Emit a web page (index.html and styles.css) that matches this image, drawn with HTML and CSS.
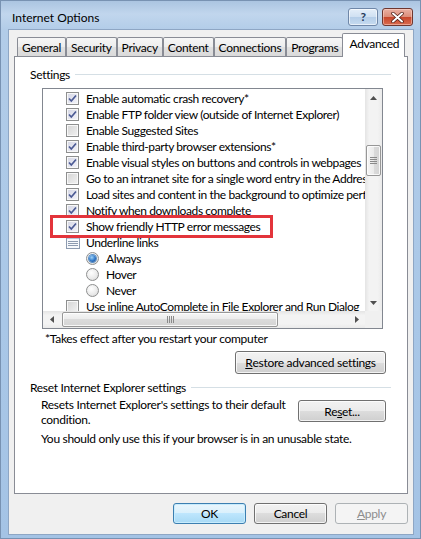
FILE: index.html
```html
<!DOCTYPE html>
<html>
<head>
<meta charset="utf-8">
<title>Internet Options</title>
<link rel="stylesheet" href="styles.css">
</head>
<body>
<div class="window">
  <div class="titlebar">
    <span class="title">Internet Options</span>
    <div class="caption">
      <div class="cap-btn help"><span>?</span></div>
      <div class="cap-btn close">
        <svg width="13" height="11" viewBox="0 0 13 11"><path d="M2 1.5 L11 9.5 M11 1.5 L2 9.5" stroke="#4a1a12" stroke-width="3.4" stroke-linecap="round"/><path d="M2 1.5 L11 9.5 M11 1.5 L2 9.5" stroke="#ffffff" stroke-width="2" stroke-linecap="round"/></svg>
      </div>
    </div>
  </div>

  <div class="client">
    <div class="tabs">
      <div class="tab">General</div>
      <div class="tab">Security</div>
      <div class="tab">Privacy</div>
      <div class="tab">Content</div>
      <div class="tab">Connections</div>
      <div class="tab">Programs</div>
      <div class="tab active">Advanced</div>
    </div>

    <div class="panel">
      <div class="group-head"><span>Settings</span><span class="rule"></span></div>

      <div class="listbox">
        <div class="list-area">
          <div class="row"><span class="cb on"><svg width="11" height="11" viewBox="0 0 11 11"><path d="M2 5.5 L4.3 8 L9 2.5" fill="none" stroke="#4b5a94" stroke-width="1.7"/></svg></span>Enable automatic crash recovery*</div>
          <div class="row"><span class="cb on"><svg width="11" height="11" viewBox="0 0 11 11"><path d="M2 5.5 L4.3 8 L9 2.5" fill="none" stroke="#4b5a94" stroke-width="1.7"/></svg></span>Enable FTP folder view (outside of Internet Explorer)</div>
          <div class="row"><span class="cb"></span>Enable Suggested Sites</div>
          <div class="row"><span class="cb on"><svg width="11" height="11" viewBox="0 0 11 11"><path d="M2 5.5 L4.3 8 L9 2.5" fill="none" stroke="#4b5a94" stroke-width="1.7"/></svg></span>Enable third-party browser extensions*</div>
          <div class="row"><span class="cb on"><svg width="11" height="11" viewBox="0 0 11 11"><path d="M2 5.5 L4.3 8 L9 2.5" fill="none" stroke="#4b5a94" stroke-width="1.7"/></svg></span>Enable visual styles on buttons and controls in webpages</div>
          <div class="row"><span class="cb"></span>Go to an intranet site for a single word entry in the Address bar</div>
          <div class="row"><span class="cb on"><svg width="11" height="11" viewBox="0 0 11 11"><path d="M2 5.5 L4.3 8 L9 2.5" fill="none" stroke="#4b5a94" stroke-width="1.7"/></svg></span>Load sites and content in the background to optimize performance</div>
          <div class="row"><span class="cb on"><svg width="11" height="11" viewBox="0 0 11 11"><path d="M2 5.5 L4.3 8 L9 2.5" fill="none" stroke="#4b5a94" stroke-width="1.7"/></svg></span>Notify when downloads complete</div>
          <div class="row"><span class="cb on"><svg width="11" height="11" viewBox="0 0 11 11"><path d="M2 5.5 L4.3 8 L9 2.5" fill="none" stroke="#4b5a94" stroke-width="1.7"/></svg></span>Show friendly HTTP error messages</div>
          <div class="row"><span class="list-icon"><svg width="14" height="13" viewBox="0 0 14 13"><rect x="0.5" y="0.5" width="13" height="12" fill="#f7f9fc" stroke="#8d9bb0"/><rect x="1" y="1" width="12" height="2" fill="#b9c6d8"/><path d="M2 5.5 H12 M2 7.5 H12 M2 9.5 H12" stroke="#8d9bb0"/></svg></span>Underline links</div>
          <div class="row sub"><span class="radio on"><span class="dot"></span></span>Always</div>
          <div class="row sub"><span class="radio"></span>Hover</div>
          <div class="row sub"><span class="radio"></span>Never</div>
          <div class="row"><span class="cb"></span>Use inline AutoComplete in File Explorer and Run Dialog</div>
          <div class="highlight"></div>
        </div>

        <div class="vscroll">
          <div class="sb-btn"><svg width="7" height="4" viewBox="0 0 7 4"><path d="M0 4 L3.5 0 L7 4 Z" fill="#505050"/></svg></div>
          <div class="vtrack">
            <div class="vthumb"><svg width="7" height="7" viewBox="0 0 7 7"><path d="M0 0.5 H7 M0 2.5 H7 M0 4.5 H7 M0 6.5 H7" stroke="#8a8a8a"/></svg></div>
          </div>
          <div class="sb-btn"><svg width="7" height="4" viewBox="0 0 7 4"><path d="M0 0 L7 0 L3.5 4 Z" fill="#505050"/></svg></div>
        </div>

        <div class="hscroll">
          <div class="sb-btn"><svg width="4" height="7" viewBox="0 0 4 7"><path d="M4 0 L4 7 L0 3.5 Z" fill="#505050"/></svg></div>
          <div class="hthumb"><svg width="7" height="7" viewBox="0 0 7 7"><path d="M0.5 0 V7 M2.5 0 V7 M4.5 0 V7 M6.5 0 V7" stroke="#8a8a8a"/></svg></div>
          <div class="htrack"></div>
          <div class="sb-btn"><svg width="4" height="7" viewBox="0 0 4 7"><path d="M0 0 L0 7 L4 3.5 Z" fill="#505050"/></svg></div>
        </div>
        <div class="corner"></div>
      </div>

      <div class="note">*Takes effect after you restart your computer</div>

      <div class="restore-row">
        <button class="btn restore"><u>R</u>estore advanced settings</button>
      </div>

      <div class="group-head reset-head"><span>Reset Internet Explorer settings</span><span class="rule"></span></div>

      <div class="reset-row">
        <p class="reset-text">Resets Internet Explorer's settings to their default<br>condition.</p>
        <button class="btn reset">Re<u>s</u>et...</button>
      </div>

      <p class="warn">You should only use this if your browser is in an unusable state.</p>
    </div>

    <div class="dialog-buttons">
      <button class="btn dlg default">OK</button>
      <button class="btn dlg">Cancel</button>
      <button class="btn dlg disabled"><u>A</u>pply</button>
    </div>
  </div>
</div>
</body>
</html>
```

FILE: styles.css
```css
* { box-sizing: border-box; }

html, body {
  margin: 0;
  padding: 0;
}

body {
  width: 421px;
  height: 539px;
  overflow: hidden;
  font-family: Lato, "Segoe UI", "Noto Sans", sans-serif;
  font-size: 12px;
  letter-spacing: -0.3px;
  color: #000;
  background: #a8c6e6;
}

.window {
  width: 421px;
  height: 539px;
  display: flex;
  flex-direction: column;
  background: linear-gradient(180deg, #a9c3e0 0, #c1d6ed 14px, #b2cce8 30px, #a9c7e7 60%, #a4c3e5 100%);
  box-shadow: inset 0 0 0 1px #7892b2;
}

/* ---------- title bar ---------- */
.titlebar {
  height: 30px;
  flex: none;
  display: flex;
  align-items: center;
  padding: 4px 8px 0 12px;
}

.title {
  flex: 1;
  letter-spacing: 0;
}

.caption {
  display: flex;
  gap: 4px;
}

.cap-btn {
  height: 18px;
  border-radius: 3px;
  display: flex;
  align-items: center;
  justify-content: center;
}

.help {
  width: 30px;
  border: 1px solid #6f87a8;
  background: linear-gradient(180deg, #e4eef9 0, #cfe0f2 50%, #b4cde8 50%, #c6dbf0 100%);
  box-shadow: inset 0 0 0 1px rgba(255, 255, 255, 0.6);
  color: #233a5a;
  font-weight: bold;
  font-size: 12px;
  line-height: 1;
}

.close {
  width: 31px;
  border: 1px solid #6e3730;
  background: linear-gradient(180deg, #eab0a3 0, #dc8c78 50%, #c7452a 50%, #d86b4f 100%);
  box-shadow: inset 0 0 0 1px rgba(255, 220, 210, 0.5);
}

/* ---------- client ---------- */
.client {
  flex: 1;
  margin: 0 8px 5px 9px;
  background: #f0f0f0;
  padding: 3px 5px 0 5px;
  box-shadow: 0 0 0 1px #8ea6c4;
}

.tabs {
  position: relative;
  z-index: 1;
  display: flex;
  align-items: flex-end;
  height: 23px;
  padding-left: 3px;
}

.tab {
  height: 19px;
  padding: 0 4px;
  border: 1px solid #898c95;
  border-bottom: 0;
  border-radius: 2px 2px 0 0;
  background: linear-gradient(180deg, #f6f6f6 0, #ededed 50%, #e1e1e1 50%, #dadada 100%);
  display: flex;
  align-items: center;
  white-space: nowrap;
}

.tab.active {
  height: 24px;
  margin: 0 0 -1px -1px;
  padding: 0 5px 4px 6px;
  background: #fff;
}

.panel {
  position: relative;
  height: 438px;
  background: #fff;
  border: 1px solid #898c95;
  padding: 9px 16px 0 15px;
}

.group-head {
  display: flex;
  align-items: center;
  height: 16px;
  white-space: nowrap;
}

.group-head .rule {
  flex: 1;
  height: 1px;
  margin-left: 5px;
  background: #d5dfe5;
}

/* ---------- listbox ---------- */
.listbox {
  margin: 6px 8px 0 12px;
  height: 241px;
  border: 1px solid #828790;
  display: grid;
  grid-template-columns: 1fr 17px;
  grid-template-rows: 1fr 17px;
}

.list-area {
  position: relative;
  overflow: hidden;
  padding-top: 1px;
  letter-spacing: -0.4px;
}

.row {
  height: 16px;
  display: flex;
  align-items: center;
  white-space: nowrap;
  padding-left: 23px;
}

.row.sub {
  padding-left: 43px;
}

.cb {
  width: 13px;
  height: 13px;
  flex: none;
  margin-right: 7px;
  border: 1px solid #8e8f8f;
  background: linear-gradient(135deg, #d4d4d4 0, #f2f2f2 100%);
  box-shadow: inset 0 0 0 1px #f8f8f8;
  display: flex;
  align-items: center;
  justify-content: center;
}

.cb.on {
  background: linear-gradient(135deg, #d4d6e4 0, #f4f4fa 100%);
}

.list-icon {
  width: 14px;
  height: 13px;
  flex: none;
  margin-right: 6px;
  display: flex;
}

.radio {
  width: 13px;
  height: 13px;
  flex: none;
  margin-right: 7px;
  border-radius: 50%;
  border: 1px solid #8e8f8f;
  background: radial-gradient(circle at 40% 35%, #ffffff 0, #e9e9e9 60%, #cfcfcf 100%);
  display: flex;
  align-items: center;
  justify-content: center;
}

.radio .dot {
  width: 7px;
  height: 7px;
  border-radius: 50%;
  background: radial-gradient(circle at 40% 35%, #9fd3f7 0, #2f77c8 55%, #163f7a 100%);
  box-shadow: 0 0 0 1px #5b8fc4;
}

.highlight {
  position: absolute;
  left: 7px;
  top: 126px;
  width: 223px;
  height: 23px;
  border: 3px solid #e3343b;
}

/* ---------- scrollbars ---------- */
.vscroll {
  display: flex;
  flex-direction: column;
  background: linear-gradient(90deg, #e4e4e4 0, #f3f3f3 25%, #f3f3f3 75%, #eaeaea 100%);
}

.sb-btn {
  width: 17px;
  height: 17px;
  flex: none;
  display: flex;
  align-items: center;
  justify-content: center;
}

.vtrack {
  flex: 1;
  padding: 39px 1px 0 1px;
}

.vthumb {
  height: 31px;
  border: 1px solid #979797;
  border-radius: 2px;
  background: linear-gradient(90deg, #f6f6f6 0, #ebebeb 50%, #dbdbdb 50%, #d4d4d4 100%);
  box-shadow: inset 0 0 0 1px rgba(255, 255, 255, 0.8);
  display: flex;
  align-items: center;
  justify-content: center;
}

.hscroll {
  display: flex;
  align-items: stretch;
  background: linear-gradient(180deg, #e4e4e4 0, #f3f3f3 25%, #f3f3f3 75%, #eaeaea 100%);
}

.hthumb {
  width: 216px;
  margin: 1px 0 1px 2px;
  border: 1px solid #979797;
  border-radius: 2px;
  background: linear-gradient(180deg, #f6f6f6 0, #ebebeb 50%, #dbdbdb 50%, #d4d4d4 100%);
  box-shadow: inset 0 0 0 1px rgba(255, 255, 255, 0.8);
  display: flex;
  align-items: center;
  justify-content: center;
}

.htrack {
  flex: 1;
}

.corner {
  background: #f0f0f0;
}

/* ---------- text & buttons ---------- */
.note {
  margin: 2px 0 0 15px;
  height: 16px;
  line-height: 16px;
}

.restore-row {
  display: flex;
  justify-content: flex-end;
  margin-top: 4px;
  padding-right: 5px;
}

.btn {
  font: inherit;
  letter-spacing: inherit;
  color: #000;
  padding: 0;
  border: 1px solid #707070;
  border-radius: 3px;
  background: linear-gradient(180deg, #f2f2f2 0, #ebebeb 50%, #dddddd 50%, #cfcfcf 100%);
  box-shadow: inset 0 0 0 1px rgba(255, 255, 255, 0.75);
  display: flex;
  align-items: center;
  justify-content: center;
}

.btn.restore {
  width: 151px;
  height: 23px;
}

.reset-head {
  margin-top: 5px;
}

.reset-row {
  display: flex;
  justify-content: space-between;
  align-items: flex-start;
  margin-top: 2px;
  padding: 0 5px 0 11px;
}

.reset-text {
  margin: 0;
  line-height: 15px;
}

.btn.reset {
  width: 88px;
  height: 22px;
  margin-top: 3px;
}

.warn {
  margin: 4px 0 0 11px;
  line-height: 16px;
}

.dialog-buttons {
  display: flex;
  justify-content: flex-end;
  gap: 8px;
  margin-top: 9px;
  padding-right: 0;
}

.btn.dlg {
  width: 73px;
  height: 21px;
}

.btn.default {
  border-color: #3c7fb1;
  background: linear-gradient(180deg, #eaf6fd 0, #d9f0fc 50%, #bee6fd 50%, #a7d9f5 100%);
  box-shadow: inset 0 0 0 1px #c8ecfd;
}

.btn.disabled {
  border-color: #adb2b5;
  background: #f4f4f4;
  box-shadow: none;
  color: #8d8d8d;
}
```
